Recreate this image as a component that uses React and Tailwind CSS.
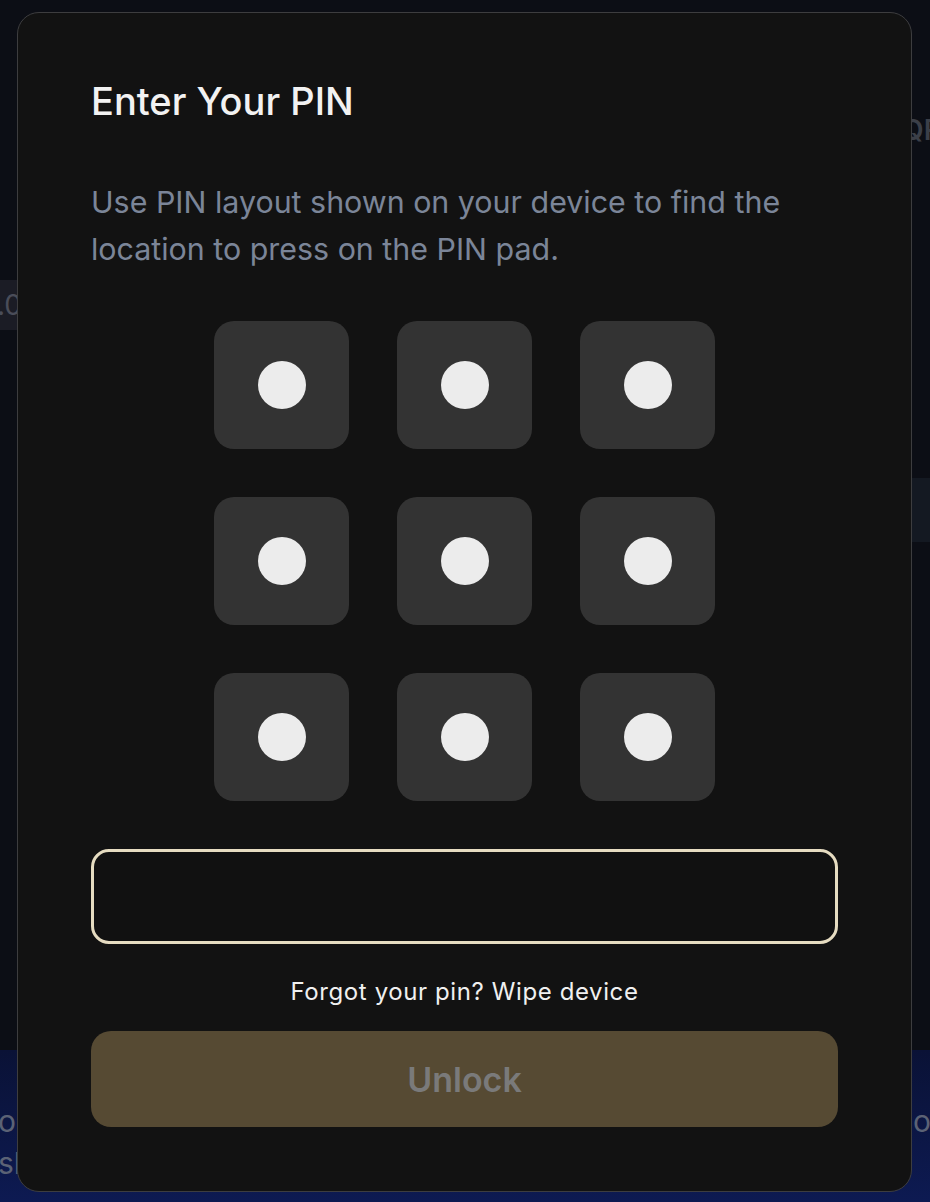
import { useState } from 'react';

const PadKey = ({ onPress }) => (
  <button
    onClick={onPress}
    className="w-[135px] h-[128px] rounded-[20px] bg-[#333333] flex items-center justify-center"
  >
    <span className="w-[48px] h-[48px] rounded-full bg-[#ececec]" />
  </button>
);

const App = () => {
  const [pin, setPin] = useState('');

  return (
    <div className="relative w-[930px] h-[1202px] overflow-hidden bg-[#0c0e15] font-['Inter','Noto_Sans',sans-serif]">
      {/* Page behind the dialog */}
      <div className="flex flex-col h-full">
        <div className="h-[108px]" />
        <div className="h-[44px] flex items-center pl-[902px] text-[28px] font-semibold text-[#3b3f48] whitespace-nowrap">
          <span className="shrink-0">QR</span>
        </div>
        <div className="h-[128px]" />
        <div className="h-[50px] w-[60px] ml-[-28px] bg-[#1b1c25] flex items-center pl-[8px] text-[28px] text-[#4a4d59] whitespace-nowrap">
          <span>0.0</span>
        </div>
        <div className="h-[148px]" />
        <div className="h-[64px] flex justify-end">
          <div className="w-[20px] bg-[#141922]" />
        </div>
        <div className="h-[508px]" />
        <div className="flex-1 bg-gradient-to-b from-[#0a1236] to-[#0d1a52] flex pt-[50px] text-[30px] text-[#5b6275] leading-[42px] whitespace-nowrap">
          <div className="flex flex-col shrink-0 w-[60px] ml-[-2px]">
            <span>on</span>
            <span>sl</span>
          </div>
          <div className="shrink-0 ml-[855px]">
            <span>on</span>
          </div>
        </div>
      </div>

      {/* Dialog */}
      <div className="absolute left-[17px] top-[12px] w-[895px] h-[1180px] rounded-[22px] border-[1.5px] border-[#3d3d3f] bg-[#121212] px-[73px] pt-[62px] flex flex-col">
        <h1 className="text-[38px] font-medium text-[#f2f2f2] leading-[52px]">
          Enter Your PIN
        </h1>

        <p className="mt-[52px] text-[30.4px] leading-[47px] text-[#7b8598]">
          Use PIN layout shown on your device to find the location to press on the PIN pad.
        </p>

        <div className="mt-[48px] self-center grid grid-cols-3 gap-x-[48px] gap-y-[48px]">
          {Array.from({ length: 9 }).map((_, i) => (
            <PadKey key={i} onPress={() => setPin((p) => p + i)} />
          ))}
        </div>

        <input
          type="password"
          value={pin}
          readOnly
          className="mt-[48px] h-[95px] w-full rounded-[18px] border-[3px] border-[#e6dcc1] bg-[#111111] outline-none px-6 text-white text-[28px]"
        />

        <p className="mt-[30px] text-center text-[24px] text-[#f0f0f0] tracking-[0.6px]">
          Forgot your pin? Wipe device
        </p>

        <button
          disabled={pin.length === 0}
          className="mt-[21px] h-[96px] w-full rounded-[20px] bg-[#564a33] text-[34px] font-semibold text-[#7a7a7a]"
        >
          Unlock
        </button>
      </div>
    </div>
  );
};

export default App;
